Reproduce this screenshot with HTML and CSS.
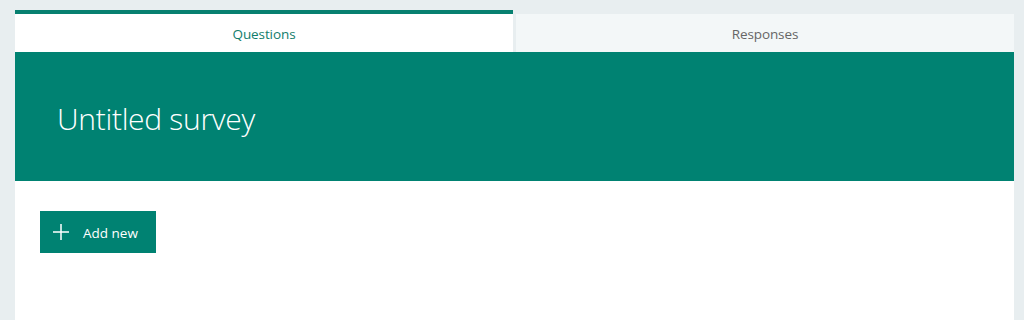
FILE: index.html
```html
<!DOCTYPE html>
<html>
<head>
<meta charset="utf-8">
<link rel="stylesheet" href="styles.css">
</head>
<body>
<div class="page">
  <div class="tabs">
    <div class="tab active">Questions</div>
    <div class="tab">Responses</div>
  </div>
  <div class="card">
    <div class="header">
      <h1 class="title">Untitled survey</h1>
    </div>
    <div class="body">
      <button class="add-btn">
        <svg class="plus" width="18" height="18" viewBox="0 0 18 18"><path d="M9 1V17M1 9H17" stroke="#fff" stroke-width="1.5" fill="none"/></svg>
        <span>Add new</span>
      </button>
    </div>
  </div>
</div>
</body>
</html>
```
FILE: styles.css
```css
html, body {
  margin: 0;
  padding: 0;
  background: #e8eef0;
  height: 100%;
  overflow: hidden;
}
body {
  font-family: "Open Sans", "Noto Sans", sans-serif;
}
.page {
  padding: 10px 10px 0 15px;
}
.tabs {
  display: flex;
  align-items: flex-end;
  gap: 3px;
  height: 42px;
}
.tab {
  flex: 1;
  display: flex;
  align-items: center;
  justify-content: center;
  font-size: 13.5px;
  color: #666;
  background: #f3f7f8;
  height: 38px;
  box-sizing: border-box;
  letter-spacing: -0.1px;
  padding-top: 2px;
}
.tab.active {
  height: 42px;
  background: #fff;
  color: #117d6c;
  border-top: 4px solid #078070;
}
.card {
  background: #fff;
  height: 280px;
}
.header {
  background: #008272;
  height: 129px;
  display: flex;
  align-items: center;
  padding-left: 42px;
}
.title {
  margin: 0;
  color: #fff;
  font-weight: 300;
  font-size: 30px;
  letter-spacing: -0.3px;
  padding-top: 4px;
}
.body {
  padding: 30px 25px;
}
.add-btn {
  display: flex;
  align-items: center;
  background: #008272;
  color: #fff;
  border: none;
  height: 42px;
  width: 116px;
  padding: 2px 0 0 12px;
  font-family: "Open Sans", "Noto Sans", sans-serif;
  font-size: 13.5px;
  cursor: pointer;
}
.plus {
  margin-right: 13px;
  margin-top: -2px;
}
```
